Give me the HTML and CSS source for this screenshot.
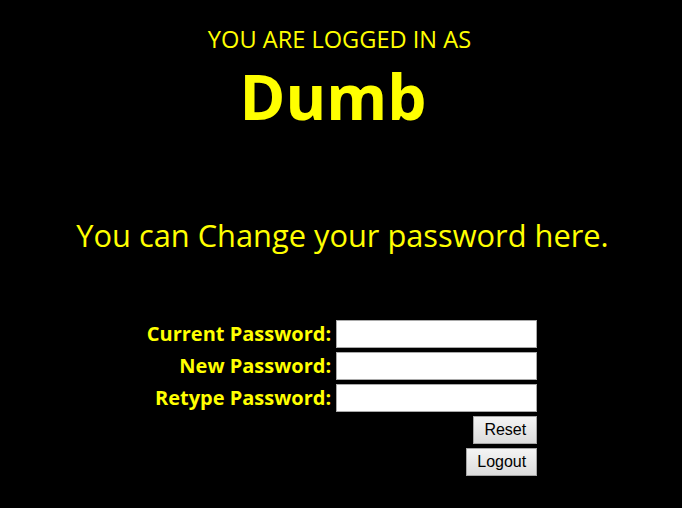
FILE: index.html
```html
<!DOCTYPE html>
<html>
<head>
<meta charset="utf-8">
<link rel="stylesheet" href="styles.css">
</head>
<body>
<div class="page">
  <div class="who">YOU ARE LOGGED IN AS</div>
  <div class="name">Dumb</div>
  <div class="lead">You can Change your password here.</div>
  <form class="form">
    <label class="lbl" for="cur">Current Password:</label>
    <input class="field" id="cur" type="password">
    <label class="lbl" for="new">New Password:</label>
    <input class="field" id="new" type="password">
    <label class="lbl" for="re">Retype Password:</label>
    <input class="field" id="re" type="password">
    <div class="actions">
      <button type="reset" class="btn">Reset</button>
      <button type="button" class="btn">Logout</button>
    </div>
  </form>
</div>
</body>
</html>
```
FILE: styles.css
```css
html, body {
  margin: 0;
  padding: 0;
  background: #000;
}
.page {
  display: flex;
  flex-direction: column;
  align-items: center;
  color: #ffff00;
  font-family: "Open Sans", "Noto Sans", sans-serif;
}
.who {
  margin-top: 24px;
  margin-left: -3px;
  font-size: 23.6px;
  line-height: 31px;
}
.name {
  margin-top: 6px;
  margin-right: 16px;
  font-size: 62px;
  font-weight: bold;
  line-height: 70px;
}
.lead {
  margin-top: 84px;
  margin-left: 3px;
  font-size: 30.8px;
  line-height: 40px;
}
.form {
  margin-top: 65px;
  margin-left: 2px;
  display: grid;
  grid-template-columns: auto 201px;
  column-gap: 5px;
  row-gap: 4px;
  align-items: center;
}
.lbl {
  text-align: right;
  font-size: 20px;
  font-weight: bold;
  line-height: 28px;
}
.field {
  box-sizing: border-box;
  width: 201px;
  height: 28px;
  margin: 0;
  border: 1px solid #a9a9a9;
  background: #fff;
  padding: 2px 4px;
}
.actions {
  grid-column: 2;
  display: flex;
  flex-direction: column;
  align-items: flex-end;
  gap: 4px;
}
.btn {
  box-sizing: border-box;
  height: 28px;
  margin: 0;
  padding: 0 10px;
  font-family: "Liberation Sans", Arial, sans-serif;
  font-size: 16px;
  color: #000;
  background: linear-gradient(#f4f4f4, #dcdcdc);
  border: 1px solid #a6a6a6;
  border-radius: 0;
}
```
